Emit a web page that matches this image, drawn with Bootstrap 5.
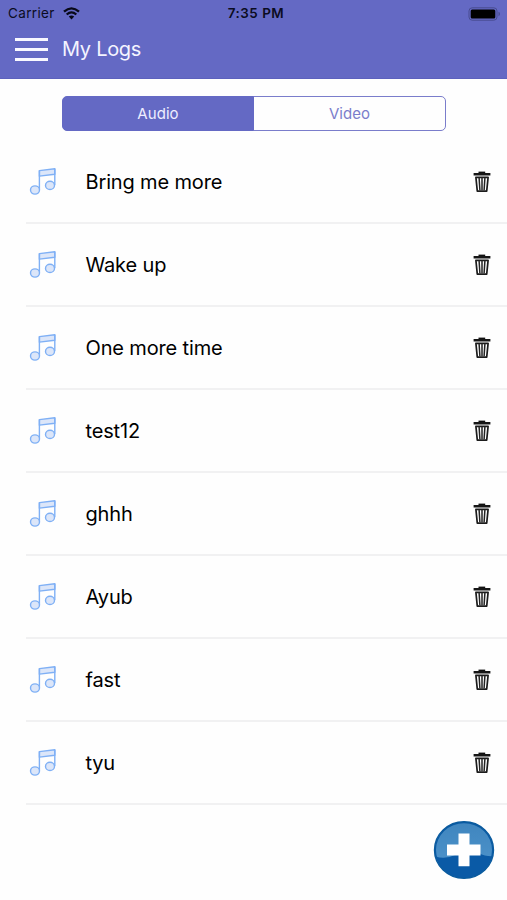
<!DOCTYPE html>
<html lang="en">
<head>
<meta charset="utf-8">
<meta name="viewport" content="width=device-width, initial-scale=1">
<title>My Logs</title>
<link href="https://cdn.jsdelivr.net/npm/bootstrap@5.3.0/dist/css/bootstrap.min.css" rel="stylesheet">
<style>
body { font-family: Inter, "Liberation Sans", sans-serif; color: #000; background: #fefefe; height: 900px; overflow: hidden; }
svg { display: block; flex: none; }
.app-header { background: #6469c4; height: 79px; border-bottom: 1px solid #5c61bd; }
.status-bar { height: 27px; padding: 0 6px 0 8px; font-size: 13.5px; line-height: 27px; color: #0b0c22; }
.status-bar > * { flex: 1 1 0; }
.carrier { letter-spacing: .35px; }
.clock { font-weight: 600; font-size: 13.4px; letter-spacing: .5px; padding-left: 3px; }
.title-bar { height: 44px; padding-left: 15px; }
.page-title { font-size: 20px; font-weight: 400; color: #f4f4ff; letter-spacing: -.3px; margin-left: 14px; }
.segments { margin: 17px 61px 0 62px; height: 35px; }
.segments .btn { --bs-btn-color: #7a7dcb; --bs-btn-border-color: #7a7dcb; --bs-btn-active-bg: #6469c4; --bs-btn-active-color: #eeeeff; --bs-btn-active-border-color: #6469c4; --bs-btn-border-radius: 5px; --bs-btn-padding-y: 0; font-size: 15px; line-height: 34px; letter-spacing: .05px; flex: 1 1 0; }
.segments .btn.active { flex: 0 0 192px; }
.log-list { margin: 9.6px 0 0 26px; }
.log-list .log-row.list-group-item { height: 83.1px; padding: 1px 16px 0 3px; border: 0; border-bottom: 2px solid #f1f1f2; background: none; color: #000; }
.log-name { font-size: 20px; margin-left: 28.5px; letter-spacing: -.15px; }
.add-btn { right: 12px; bottom: 20px; }
</style>
<script src="https://cdn.jsdelivr.net/npm/bootstrap@5.3.0/dist/js/bootstrap.bundle.min.js"></script>
</head>
<body>
<svg width="0" height="0" class="position-absolute" aria-hidden="true">
  <symbol id="note" viewBox="0 0 28 30">
    <g fill="#dce6f9" stroke="#7fb0f5" stroke-width="1.4" stroke-linejoin="round">
      <path d="M10.4 3.6L25.8 1.7V7.2L10.4 9.1Z"/>
      <path d="M10.4 3.6V22.5M25.8 1.7V18" fill="none"/>
      <ellipse cx="6" cy="23" rx="4.5" ry="4.1"/>
      <ellipse cx="21" cy="18.4" rx="4.5" ry="4.1"/>
    </g>
  </symbol>
  <symbol id="trash" viewBox="0 0 18 22">
    <path d="M5.5 .6H12.2V2.8H5.5Z" fill="#111"/>
    <path d="M.6 2H17.4V4.5H.6Z" fill="#161616"/>
    <path d="M2.9 6.3H15.1L13.7 20.2H4.3Z" fill="#fff" stroke="#1c1c1c" stroke-width="1.7" stroke-linejoin="round"/>
    <path d="M6.1 6.7L6.9 19.2M9 6.7V19.2M11.9 6.7L11.1 19.2" fill="none" stroke="#222" stroke-width="1.5"/>
  </symbol>
</svg>

<header class="app-header">
  <div class="status-bar d-flex align-items-center">
    <div class="d-flex align-items-center"><span class="carrier">Carrier</span>
      <svg class="ms-2" width="17" height="13" viewBox="0 0 17 13" fill="none" stroke="#080918" stroke-width="2.3"><path d="M1 4.7Q8.5-2 16 4.7M3.7 7.5Q8.5 3.2 13.3 7.5"/><path d="M5.8 9.6Q8.5 7.3 11.2 9.6L8.5 12.4Z" fill="#080918" stroke="none"/></svg>
    </div>
    <div class="clock text-center">7:35 PM</div>
    <div class="d-flex justify-content-end">
      <svg width="33" height="14" viewBox="0 0 33 14"><rect x="1" y=".8" width="28" height="12.4" rx="3.2" fill="none" stroke="#484c90"/><rect x="2.7" y="2.5" width="24.6" height="9" rx="1.5" fill="#000"/><path d="M30.5 4.8Q32 5.4 32 7T30.5 9.2Z" fill="#484c90"/></svg>
    </div>
  </div>
  <div class="title-bar d-flex align-items-center">
    <svg width="33" height="25" viewBox="0 0 33 25" fill="#f8f8ff"><path d="M0 1H33V4H0ZM0 11H33V14H0ZM0 21H33V24H0Z"/></svg>
    <h1 class="page-title mb-0">My Logs</h1>
  </div>
</header>

<main>
  <div class="segments btn-group d-flex">
    <button type="button" class="btn active">Audio</button>
    <button type="button" class="btn">Video</button>
  </div>
  <ul class="log-list list-group list-group-flush">
    <li class="log-row list-group-item d-flex align-items-center"><svg width="28" height="30"><use href="#note"/></svg><span class="log-name">Bring me more</span><svg class="ms-auto" width="18" height="22"><use href="#trash"/></svg></li>
    <li class="log-row list-group-item d-flex align-items-center"><svg width="28" height="30"><use href="#note"/></svg><span class="log-name">Wake up</span><svg class="ms-auto" width="18" height="22"><use href="#trash"/></svg></li>
    <li class="log-row list-group-item d-flex align-items-center"><svg width="28" height="30"><use href="#note"/></svg><span class="log-name">One more time</span><svg class="ms-auto" width="18" height="22"><use href="#trash"/></svg></li>
    <li class="log-row list-group-item d-flex align-items-center"><svg width="28" height="30"><use href="#note"/></svg><span class="log-name">test12</span><svg class="ms-auto" width="18" height="22"><use href="#trash"/></svg></li>
    <li class="log-row list-group-item d-flex align-items-center"><svg width="28" height="30"><use href="#note"/></svg><span class="log-name">ghhh</span><svg class="ms-auto" width="18" height="22"><use href="#trash"/></svg></li>
    <li class="log-row list-group-item d-flex align-items-center"><svg width="28" height="30"><use href="#note"/></svg><span class="log-name">Ayub</span><svg class="ms-auto" width="18" height="22"><use href="#trash"/></svg></li>
    <li class="log-row list-group-item d-flex align-items-center"><svg width="28" height="30"><use href="#note"/></svg><span class="log-name">fast</span><svg class="ms-auto" width="18" height="22"><use href="#trash"/></svg></li>
    <li class="log-row list-group-item d-flex align-items-center"><svg width="28" height="30"><use href="#note"/></svg><span class="log-name">tyu</span><svg class="ms-auto" width="18" height="22"><use href="#trash"/></svg></li>
  </ul>
</main>

<button type="button" class="add-btn btn p-0 border-0 position-fixed" aria-label="Add log">
  <svg width="62" height="60" viewBox="0 0 62 60">
    <defs>
      <linearGradient id="gloss" x2="0" y2="1"><stop stop-color="#3f85be"/><stop offset="1" stop-color="#4a90c8"/></linearGradient>
      <clipPath id="disc"><ellipse cx="31" cy="30" rx="28" ry="26.8"/></clipPath>
    </defs>
    <ellipse cx="31" cy="30" rx="29.5" ry="28.3" fill="#0a5aa6" stroke="#0a5b9e" stroke-width="1.4"/>
    <path clip-path="url(#disc)" d="M0 0H62V36Q53 37 46 33Q31 29 22 35Q12 40 0 36Z" fill="url(#gloss)"/>
    <path d="M25.5 13.5H36.5V24.5H47.5V35.5H36.5V46.2H25.5V35.5H14V24.5H25.5Z" fill="#fff"/>
  </svg>
</button>
</body>
</html>
